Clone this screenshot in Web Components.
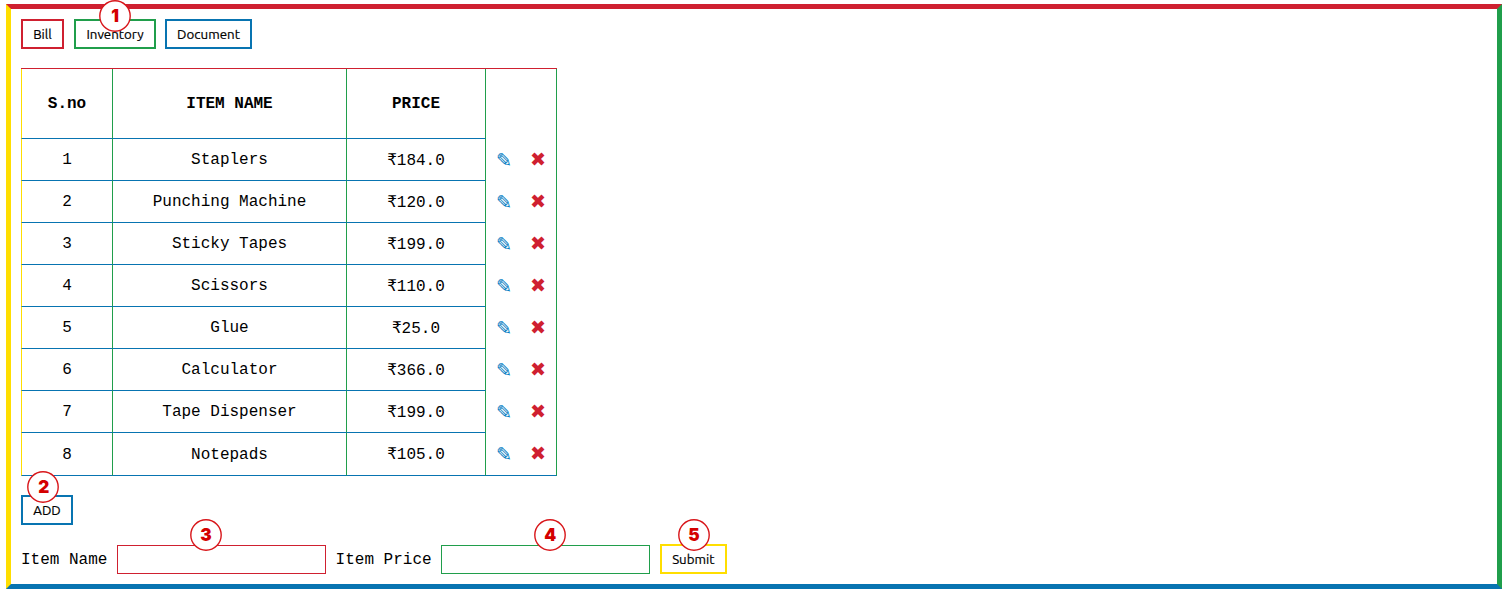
<!DOCTYPE html>
<html lang="en"><head><meta charset="utf-8"><title>Inventory</title>
<style>
html{--red:#cf2030;--green:#209e4b;--blue:#0874b1;--yellow:#ffde00}
body{margin:0;background:#fff;color:#000;font:16px "Liberation Mono",monospace;overflow:hidden}
</style></head><body>
<inventory-app></inventory-app>
<script>
class StepBadge extends HTMLElement{
 connectedCallback(){this.attachShadow({mode:'open'}).innerHTML=`<style>
 :host{position:absolute;left:var(--x);top:var(--y);width:32px;height:32px;display:grid;place-items:center;color:#d40000;font:900 18px/32px Inter,"Noto Sans",sans-serif;z-index:2}
 svg,span{grid-area:1/1}
 span{transform:scaleX(.95)}
 </style><svg width="32" height="32"><circle cx="16" cy="16" r="15.2" fill="#fff" stroke="#d8161a" stroke-width="1.4"/></svg><span><slot></slot></span>`}
}
customElements.define('step-badge',StepBadge);
class ActionButton extends HTMLElement{
 connectedCallback(){this.attachShadow({mode:'open'}).innerHTML=`<style>
 :host{display:block;position:relative;width:var(--w);height:30px}
 button{width:100%;height:30px;box-sizing:border-box;padding:1px 0 0;margin:0;border:2px solid var(--c);background:#fff;color:#000;font:13.33px/25px Ubuntu,"Noto Sans",sans-serif;-webkit-text-stroke:.2px #000;letter-spacing:var(--ls,0);white-space:nowrap;display:block}
 </style><button><slot></slot></button><slot name="badge"></slot>`}
}
customElements.define('action-button',ActionButton);
class TextField extends HTMLElement{
 connectedCallback(){this.attachShadow({mode:'open'}).innerHTML=`<style>
 :host{display:flex;position:relative;align-items:center;gap:9.6px;white-space:pre}
 label{padding-top:2px;height:28px;line-height:28px}
 input{width:209px;height:29px;box-sizing:border-box;border:1px solid var(--c);padding:0 4px;margin:1px 0 0;background:#fff;outline:0;display:block}
 </style><label>${this.getAttribute('label')}</label><input type="text"><slot></slot>`}
}
customElements.define('text-field',TextField);
class InventoryTable extends HTMLElement{
 connectedCallback(){
 const items=[['Staplers','184.0'],['Punching Machine','120.0'],['Sticky Tapes','199.0'],['Scissors','110.0'],['Glue','25.0'],['Calculator','366.0'],['Tape Dispenser','199.0'],['Notepads','105.0']];
 const rows=items.map(([n,p],i)=>`<div class="row"><div class="c a">${i+1}</div><div class="c">${n}</div><div class="c p">₹${p}</div><div class="act"><span class="e">✎</span><span class="x">✖</span></div></div>`).join('');
 this.attachShadow({mode:'open'}).innerHTML=`<style>
 :host{display:block;width:536px;box-sizing:border-box;border-top:1px solid var(--red)}
 .row{display:grid;grid-template-columns:92px 234px 139px 71px;height:42px}
 .head{height:70px;font-weight:700}
 .row:last-child{height:43px}
 .c,.act{box-sizing:border-box;border-right:1px solid var(--green);display:flex;align-items:center;justify-content:center}
 .c{border-bottom:1px solid var(--blue);padding-top:1px}
 .a{border-left:1px solid var(--yellow)}
 .row:last-child .p{padding:0}
 .act{padding:2px 0 0 10px;justify-content:flex-start;font:19.2px/20px "DejaVu Sans",sans-serif}
 .row:last-child .act{border-bottom:1px solid var(--blue)}
 .e{color:#0880c4;-webkit-text-stroke:.08px #0880c4;width:34px}.x{color:var(--red);width:20px;padding-bottom:2px}
 </style><div class="row head"><div class="c a">S.no</div><div class="c">ITEM NAME</div><div class="c">PRICE</div><div class="act"></div></div>${rows}`}
}
customElements.define('inventory-table',InventoryTable);
class InventoryApp extends HTMLElement{
 connectedCallback(){this.attachShadow({mode:'open'}).innerHTML=`<style>
 :host{display:block;box-sizing:border-box;margin:4px 6px 0;height:585px;padding:10px;border:5px solid;border-color:var(--red) var(--green) var(--blue) var(--yellow)}
 nav{display:flex;padding-bottom:19px}
 .add{padding:19px 0}
 form{display:flex;gap:9.6px}
 </style>
 <nav><action-button style="--w:43px;--c:var(--red);margin-right:10px">Bill</action-button>
 <action-button style="--w:82px;--c:var(--green);margin-right:9px">Inventory<step-badge slot="badge" style="--x:25.3px;--y:-19.5px">1</step-badge></action-button>
 <action-button style="--w:87px;--c:var(--blue);--ls:.05px">Document</action-button></nav>
 <inventory-table></inventory-table>
 <div class="add"><action-button style="--w:52px;--c:var(--blue)">ADD<step-badge slot="badge" style="--x:6.4px;--y:-24px">2</step-badge></action-button></div>
 <form><text-field label="Item Name" style="--c:var(--red)"><step-badge style="--x:169px;--y:-25.5px">3</step-badge></text-field>
 <text-field label="Item Price" style="--c:var(--green)"><step-badge style="--x:198.4px;--y:-25.5px">4</step-badge></text-field>
 <action-button style="--w:67px;--c:var(--yellow)">Submit<step-badge slot="badge" style="--x:18.2px;--y:-25.5px">5</step-badge></action-button></form>`}
}
customElements.define('inventory-app',InventoryApp);
</script></body></html>
